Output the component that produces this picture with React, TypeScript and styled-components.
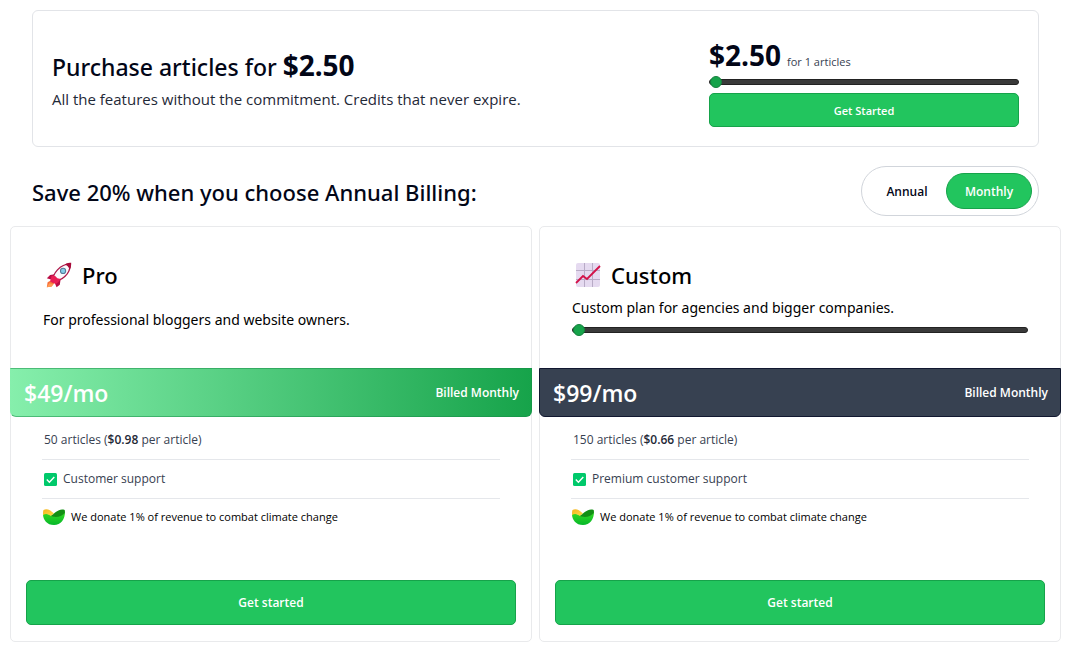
import React, { useState } from "react";
import styled, { createGlobalStyle, css } from "styled-components";

const GlobalStyle = createGlobalStyle`
  *, *::before, *::after { box-sizing: border-box; }
  body {
    margin: 0;
    background: #fff;
    color: #020617;
    font-family: "Segoe UI", "Open Sans", "Noto Sans", sans-serif;
    font-size: 12px;
    line-height: 20px;
  }
  h1, h2, h3, p, ul { margin: 0; padding: 0; }
  h1, h2, h3 { font-family: "Segoe UI", "Noto Sans", "Open Sans", sans-serif; }
  button { font-family: inherit; cursor: pointer; }
`;

const Page = styled.main`
  padding: 10px 9px 8px 10px;
`;

const TopArea = styled.div`
  padding: 0 22px;
`;

const CreditCard = styled.section`
  display: flex;
  align-items: center;
  justify-content: space-between;
  gap: 24px;
  min-height: 137px;
  padding: 0 19px;
  border: 1px solid #e2e4e8;
  border-radius: 6px;
`;

const CreditIntro = styled.div`
  padding-top: 4px;
`;

const CreditTitle = styled.h1`
  font-size: 23px;
  font-weight: 500;
  line-height: 36px;
  strong { font-size: 28px; font-weight: 700; line-height: 28px; }
`;

const CreditText = styled.p`
  font-size: 15px;
  line-height: 28px;
  color: #1f2937;
`;

const CreditPurchase = styled.div`
  display: flex;
  flex-direction: column;
  width: 310px;
  padding-top: 6px;
`;

const CreditPrice = styled.p`
  font-size: 28px;
  font-weight: 700;
  line-height: 38px;
  padding-bottom: 2px;
  span {
    margin-left: 6px;
    font-size: 11px;
    font-weight: 400;
    line-height: 12px;
    color: #374151;
  }
`;

const Slider = styled.input.attrs({ type: "range" })`
  appearance: none;
  display: block;
  width: 100%;
  height: 12px;
  margin: 0;
  background: transparent;
  &::-webkit-slider-runnable-track {
    height: 6px;
    border: 1px solid #222;
    border-radius: 3px;
    background: #3a3a3a;
  }
  &::-webkit-slider-thumb {
    appearance: none;
    width: 12px;
    height: 12px;
    margin-top: -4px;
    border: 1px solid #15803d;
    border-radius: 50%;
    background: #16a34a;
  }
`;

const GreenButton = styled.button<{ $large?: boolean }>`
  height: ${(p) => (p.$large ? 45 : 34)}px;
  border: 1px solid #16a34a;
  border-radius: 5px;
  background: #22c55e;
  color: #fff;
  font-size: ${(p) => (p.$large ? 12 : 11)}px;
  font-weight: 600;
  ${CreditPurchase} & { margin-top: 5px; }
`;

const BillingRow = styled.div`
  display: flex;
  align-items: center;
  justify-content: space-between;
  padding: 19px 0 10px;
`;

const BillingTitle = styled.h2`
  padding-top: 2px;
  font-size: 22px;
  font-weight: 500;
  line-height: 32px;
`;

const Toggle = styled.div`
  display: flex;
  align-items: center;
  height: 50px;
  padding: 0 6px;
  border: 1px solid #d1d5db;
  border-radius: 25px;
`;

const ToggleOption = styled.button<{ $active?: boolean }>`
  height: 36px;
  width: ${(p) => (p.$active ? 86 : 78)}px;
  padding: 0;
  border: 1px solid transparent;
  border-radius: 18px;
  background: transparent;
  color: #020617;
  font-size: 12px;
  font-weight: 600;
  ${(p) =>
    p.$active &&
    css`
      border-color: #16a34a;
      background: #22c55e;
      color: #fff;
    `}
`;

const Plans = styled.div`
  display: grid;
  grid-template-columns: 1fr 1fr;
  gap: 7px;
`;

const PlanCard = styled.article`
  display: flex;
  flex-direction: column;
  border: 1px solid #e9eaec;
  border-radius: 5px;
`;

const PlanHead = styled.div`
  min-height: 141px;
  padding: 31px 32px 0;
`;

const PlanName = styled.h3`
  display: flex;
  align-items: center;
  gap: 10px;
  padding-left: 3px;
  font-size: 22px;
  font-weight: 500;
  line-height: 34px;
  color: #000;
`;

const PlanText = styled.p<{ $spaced?: boolean }>`
  padding-top: ${(p) => (p.$spaced ? 16 : 4)}px;
  padding-bottom: 4px;
  font-family: "Segoe UI", "Noto Sans", "Open Sans", sans-serif;
  font-size: 14px;
  line-height: 24px;
  color: #000;
`;

const PriceBand = styled.div<{ $tone: "green" | "slate" }>`
  display: flex;
  align-items: center;
  justify-content: space-between;
  height: 49px;
  margin: 0 -1px;
  padding: 0 12px 0 13px;
  border-radius: 0 0 6px 6px;
  border: 1px solid;
  color: #fff;
  ${(p) =>
    p.$tone === "green"
      ? css`
          border-color: rgba(22, 140, 70, 0.5);
          border-left-color: transparent;
          background: linear-gradient(to right, #86efac, #16a34a) border-box;
        `
      : css`
          border-color: #111830;
          background: #374151;
        `}
`;

const Price = styled.span`
  font-size: 23px;
  font-weight: 600;
  line-height: 32px;
`;

const Billed = styled.span`
  font-size: 12px;
  font-weight: 600;
`;

const Features = styled.ul`
  padding: 4px 31px 0;
  list-style: none;
`;

const Feature = styled.li<{ $dark?: boolean }>`
  display: flex;
  align-items: center;
  gap: 6px;
  height: ${(p) => (p.$dark ? 36 : 39)}px;
  padding-left: ${(p) => (p.$dark ? 1 : 2)}px;
  color: ${(p) => (p.$dark ? "#000" : "#374151")};
  font-size: ${(p) => (p.$dark ? 11 : 12)}px;
  &:not(:last-child) { border-bottom: 1px solid #e5e7eb; }
  strong { font-weight: 600; color: #1f2937; }
`;

const PlanFoot = styled.div`
  display: grid;
  padding: 45px 15px 16px;
`;

function Rocket() {
  return (
    <svg width="26" height="26" viewBox="0 0 32 32" aria-hidden="true">
      <path d="M7 22 2 25l-1 6 6-1 4-5z" fill="#f8703a" />
      <path d="M4 26 1 31l6-1 2-3z" fill="#ff9b52" />
      <path d="M11 15 5 16l-4 4 7 2zM18 21l-1 7-4 3-3-7z" fill="#b90d45" />
      <path d="M8 24C8 14 17 3 30 2c0 13-11 22-22 22Z" fill="#fbf8fc" stroke="#ad1748" strokeWidth="1.6" />
      <path d="M23 3c3-2 6-2 8-2 0 3 0 6-2 8-1-3-3-5-6-6z" fill="#a80c3b" />
      <path d="m7 17 4 0 3 3 4 1-3 4-3 2-7-3z" fill="#e91e55" />
      <circle cx="21" cy="11" r="3.2" fill="#83cbe8" stroke="#577b98" strokeWidth="1.3" />
    </svg>
  );
}

function ChartIcon() {
  return (
    <svg width="26" height="26" viewBox="0 0 26 26" aria-hidden="true">
      <rect x="1" y="1" width="24" height="24" rx="2" fill="#e5daf0" />
      <path d="M9.500 1v24M17.500 1v24M1 8.500h24M1 17.500h24" stroke="#b8abc6" fill="none" />
      <path d="m1 21 7-7 4 3L25 4" stroke="#d31249" strokeWidth="1.8" fill="none" />
    </svg>
  );
}

function CheckIcon() {
  return (
    <svg width="13" height="13" viewBox="0 0 13 13" aria-hidden="true">
      <rect width="13" height="13" rx="1.5" fill="#00c96b" />
      <path d="m2.800 6.600 2.600 2.700 4.900-5.300" stroke="#fff" strokeWidth="1.4" fill="none" />
    </svg>
  );
}

function ClimateIcon() {
  return (
    <svg width="22" height="16" viewBox="0 0 22 16" aria-hidden="true">
      <defs>
        <linearGradient id="leaf" x1="0" y1="0" x2="0" y2="1">
          <stop offset="0" stopColor="#35dc20" />
          <stop offset="1" stopColor="#06b72b" />
        </linearGradient>
        <linearGradient id="sun" x1="0" y1="0" x2="1" y2="1">
          <stop offset="0" stopColor="#f5b41d" />
          <stop offset="1" stopColor="#ffdc4a" />
        </linearGradient>
      </defs>
      <path d="M0 5c4-1 7 1 10 2 4 1 9 0 12-4 0 7-4 13-11 13S0 11 0 5Z" fill="url(#leaf)" />
      <path d="M0 6C0 4 0 2 .5 1 4-.7 7 1 11 4.500L8 7C5 5 3 4 0 6Z" fill="url(#sun)" />
      <path d="M8 7C12 4 16-1 21.700 1c.3 1 .3 2 .2 3C18 8 13 9 8 7Z" fill="#128f14" />
    </svg>
  );
}

interface Plan {
  name: string;
  icon: React.ReactNode;
  text: string;
  price: string;
  articles: string;
  each: string;
  support: string;
  tone: "green" | "slate";
  slider?: boolean;
}

const plans: Plan[] = [
  {
    name: "Pro",
    icon: <Rocket />,
    text: "For professional bloggers and website owners.",
    price: "$49/mo",
    articles: "50 articles",
    each: "$0.98",
    support: "Customer support",
    tone: "green",
  },
  {
    name: "Custom",
    icon: <ChartIcon />,
    text: "Custom plan for agencies and bigger companies.",
    price: "$99/mo",
    articles: "150 articles",
    each: "$0.66",
    support: "Premium customer support",
    tone: "slate",
    slider: true,
  },
];

export default function App() {
  const [billing, setBilling] = useState("Monthly");
  return (
    <>
      <GlobalStyle />
      <Page>
        <TopArea>
          <CreditCard>
            <CreditIntro>
              <CreditTitle>
                Purchase articles for <strong>$2.50</strong>
              </CreditTitle>
              <CreditText>
                All the features without the commitment. Credits that never expire.
              </CreditText>
            </CreditIntro>
            <CreditPurchase>
              <CreditPrice>
                $2.50<span>for 1 articles</span>
              </CreditPrice>
              <Slider aria-label="Number of articles" min={1} max={100} defaultValue={1} />
              <GreenButton>Get Started</GreenButton>
            </CreditPurchase>
          </CreditCard>
          <BillingRow>
            <BillingTitle>Save 20% when you choose Annual Billing:</BillingTitle>
            <Toggle role="group" aria-label="Billing period">
              {["Annual", "Monthly"].map((option) => (
                <ToggleOption
                  key={option}
                  $active={billing === option}
                  aria-pressed={billing === option}
                  onClick={() => setBilling(option)}
                >
                  {option}
                </ToggleOption>
              ))}
            </Toggle>
          </BillingRow>
        </TopArea>
        <Plans>
          {plans.map((plan) => (
            <PlanCard key={plan.name}>
              <PlanHead>
                <PlanName>
                  {plan.icon}
                  {plan.name}
                </PlanName>
                <PlanText $spaced={!plan.slider}>{plan.text}</PlanText>
                {plan.slider && (
                  <Slider aria-label="Articles per month" min={150} max={1000} defaultValue={150} />
                )}
              </PlanHead>
              <PriceBand $tone={plan.tone}>
                <Price>{plan.price}</Price>
                <Billed>Billed {billing === "Annual" ? "Annually" : "Monthly"}</Billed>
              </PriceBand>
              <Features>
                <Feature>
                  <span>
                    {plan.articles} (<strong>{plan.each}</strong> per article)
                  </span>
                </Feature>
                <Feature>
                  <CheckIcon />
                  {plan.support}
                </Feature>
                <Feature $dark>
                  <ClimateIcon />
                  We donate 1% of revenue to combat climate change
                </Feature>
              </Features>
              <PlanFoot>
                <GreenButton $large>Get started</GreenButton>
              </PlanFoot>
            </PlanCard>
          ))}
        </Plans>
      </Page>
    </>
  );
}
